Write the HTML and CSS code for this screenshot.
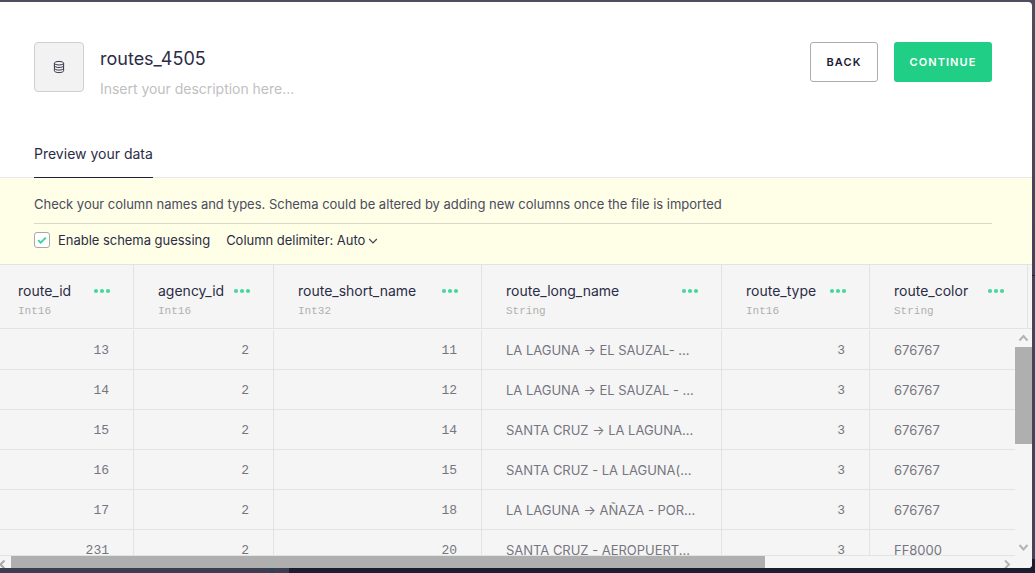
FILE: index.html
```html
<!DOCTYPE html>
<html lang="en">
<head>
<meta charset="utf-8">
<title>routes_4505</title>
<link rel="stylesheet" href="styles.css">
</head>
<body>
<div class="backdrop"><i class="seam"></i><i class="mark"></i></div>
<main class="modal">
  <header class="head">
    <div class="thumb">
      <svg width="12" height="14" viewBox="0 0 12 14" fill="none" stroke="#38384c" stroke-width="1"><ellipse cx="6" cy="3.2" rx="4.600" ry="1.800"/><path d="M1.400 3.200v7.600c0 1 2 1.800 4.600 1.800s4.600-.8 4.600-1.800V3.200M1.400 5.700c0 1 2 1.800 4.600 1.800s4.600-.8 4.600-1.800M1.400 8.300c0 1 2 1.800 4.600 1.800s4.600-.8 4.600-1.800"/></svg>
    </div>
    <div class="titles">
      <h1 class="title">routes_4505</h1>
      <p class="desc">Insert your description here...</p>
    </div>
    <div class="actions">
      <button class="btn back">BACK</button>
      <button class="btn continue">CONTINUE</button>
    </div>
  </header>
  <nav class="tabs"><span class="tab">Preview your data</span></nav>
  <section class="notice">
    <p class="hint">Check your column names and types. Schema could be altered by adding new columns once the file is imported</p>
    <div class="options">
      <span class="check"><svg width="14" height="14" viewBox="1 1 14 14" fill="none" stroke="#42d39a" stroke-width="2"><path d="M4.200 8.100l2.500 2.500 5.100-5"/></svg></span>
      <span class="guess">Enable schema guessing</span>
      <span class="delim">Column delimiter: Auto</span>
      <svg class="caret" width="10" height="8" viewBox="0 0 10 8" fill="none" stroke="#454557" stroke-width="1.2"><path d="M1.200 2l3.800 3.800L8.800 2"/></svg>
    </div>
  </section>
  <section class="grid-head" id="columns"></section>
  <section class="grid-area">
    <div class="rows" id="rows"></div>
    <div class="vbar">
      <svg class="up" width="17" height="18" viewBox="0 0 17 18" fill="none" stroke="#b3b3b3" stroke-width="2"><path d="M4.500 11.500l4-4.500 4 4.500"/></svg>
      <div class="vthumb"></div>
      <svg class="down" width="17" height="18" viewBox="0 0 17 18" fill="none" stroke="#b3b3b3" stroke-width="2"><path d="M4.500 7l4 4.500 4-4.500"/></svg>
    </div>
  </section>
  <div class="hbar">
    <svg width="11" height="12" viewBox="0 0 11 12" fill="none" stroke="#a9a9a9" stroke-width="2"><path d="M4.500 4.500l-4 4 4 4"/></svg>
    <div class="hthumb"></div>
    <svg class="right" width="11" height="12" viewBox="0 0 11 12" fill="none" stroke="#b3b3b3" stroke-width="2"><path d="M1 4.500l4 4-4 4"/></svg>
  </div>
</main>
<script src="table.js"></script>
</body>
</html>
```
FILE: styles.css
```css
* { box-sizing: border-box; }
body { margin: 0; width: 1035px; height: 573px; overflow: hidden; background: linear-gradient(#4f4e5f, #434457 250px, #434457 559px, #1c1d2e 559px); font-family: Inter, "Liberation Sans", sans-serif; color: #2c2c46; padding-top: 2px; }
h1, p { margin: 0; font-weight: 400; }
.backdrop { position: absolute; left: 0; right: 0; bottom: 0; height: 5px; background: #1c1d2e; display: flex; }
.backdrop::before { content: ""; width: 271px; background: #3c3e4f; }
.seam { width: 2px; background: #184663; }
.mark { width: 16px; background: #3c3e4f; }
.backdrop::after { content: ""; position: absolute; right: 0; bottom: 297px; width: 3px; height: 1px; background: #202133; }
.modal { position: relative; width: 1032px; height: 566px; background: #fff; border-radius: 0 4px 4px 0; overflow: hidden; display: flex; flex-direction: column; }
.head { height: 128px; padding: 40px 40px 0 34px; display: flex; align-items: flex-start; flex: none; }
.thumb { width: 50px; height: 50px; border: 1px solid #cfcfcf; border-radius: 4px; background: #f2f2f2; display: flex; align-items: center; justify-content: center; }
.titles { margin-left: 16px; padding-top: 5px; flex: 1; }
.title { font-size: 18px; line-height: 24px; }
.desc { margin-top: 8px; font-size: 14px; line-height: 20px; letter-spacing: -0.025px; color: #bfbfbf; }
.actions { display: flex; gap: 16px; }
.btn { height: 40px; border-radius: 3px; font: 600 11px/16px Inter, sans-serif; letter-spacing: 1.07px; padding: 0; text-align: center; }
.back { width: 68px; border: 1px solid #adadad; background: #fff; color: #1b1b35; }
.continue { width: 98px; border: 0; background: #21ce85; color: #fff; }
.tabs { height: 48px; flex: none; padding-left: 34px; border-bottom: 1px solid #e8e8e6; display: flex; }
.tab { height: 48px; line-height: 48px; font-size: 14px; border-bottom: 1px solid #21213b; }
.notice { height: 86px; flex: none; background: #feffe6; padding: 16px 40px 0 34px; letter-spacing: -0.018px; }
.hint { height: 30px; line-height: 21px; font-size: 13px; color: #4b4b61; border-bottom: 1px solid #d8dac7; }
.options { display: flex; align-items: center; height: 32px; font-size: 13px; letter-spacing: -0.03px; }
.check { width: 16px; height: 16px; border: 1px solid #a8a8a8; border-radius: 3px; background: #fff; display: flex; align-items: center; justify-content: center; }
.guess { margin-left: 8px; }
.delim { margin-left: 16px; }
.caret { margin: 2px 0 0 3px; }
.grid-head { height: 65px; flex: none; border-top: 1px solid #e3e3e3; border-bottom: 1px solid #e3e3e3; background: #f5f5f5; }
.grid-head, .row { grid-template-columns: 134px 140px 208px 240px 148px 158px 140px; display: grid; }
.col { border-right: 1px solid #e3e3e3; padding: 16px 22px 0 24px; }
.col:first-child { padding-left: 18px; }
.name { display: flex; align-items: center; justify-content: space-between; font-size: 14px; line-height: 20px; }
.type { font: 11px/14px "Liberation Mono", monospace; color: #b0b0b0; margin-top: 3px; }
.grid-area { height: 227px; flex: none; display: flex; background: #f5f5f5; overflow: hidden; }
.rows { width: 1015px; padding-top: 1px; overflow: hidden; border-bottom: 1px solid #e3e3e3; }
.row { height: 40px; border-bottom: 1px solid #e3e3e3; }
.cell { border-right: 1px solid #e3e3e3; padding: 0 24px; font-size: 13px; line-height: 41px; letter-spacing: -0.02px; color: #757580; white-space: nowrap; }
.num { text-align: right; font-family: "Liberation Mono", monospace; letter-spacing: 0; }
.vbar { width: 17px; display: flex; flex-direction: column; }
.vthumb { height: 97px; background: #afafaf; }
.down { margin-top: auto; }
.hbar { height: 12px; display: flex; background: #f5f5f5; }
.hthumb { width: 754px; background: #afafaf; }
.right { margin-left: 239px; }
```
FILE: table.js
```js
const columns = [
  ["route_id", "Int16"], ["agency_id", "Int16"], ["route_short_name", "Int32"],
  ["route_long_name", "String"], ["route_type", "Int16"], ["route_color", "String"]
];
const dots = '<svg width="18" height="6" viewBox="0 0 18 6" fill="#47d69b"><circle cx="3" cy="3" r="2.1"/><circle cx="9" cy="3" r="2.1"/><circle cx="15" cy="3" r="2.1"/></svg>';
document.getElementById("columns").innerHTML = columns.map(([name, type]) =>
  `<div class="col"><div class="name"><span>${name}</span>${dots}</div><div class="type">${type}</div></div>`).join("");

const rows = [
  [13, 2, 11, "LA LAGUNA → EL SAUZAL- ...", 3, "676767"],
  [14, 2, 12, "LA LAGUNA → EL SAUZAL - ...", 3, "676767"],
  [15, 2, 14, "SANTA CRUZ → LA LAGUNA...", 3, "676767"],
  [16, 2, 15, "SANTA CRUZ - LA LAGUNA(...", 3, "676767"],
  [17, 2, 18, "LA LAGUNA → AÑAZA - POR...", 3, "676767"],
  [231, 2, 20, "SANTA CRUZ - AEROPUERT...", 3, "FF8000"]
];
document.getElementById("rows").innerHTML = rows.map(row =>
  `<div class="row">${row.map(v => `<div class="cell${typeof v === "number" ? " num" : ""}">${v}</div>`).join("")}</div>`).join("");
```
